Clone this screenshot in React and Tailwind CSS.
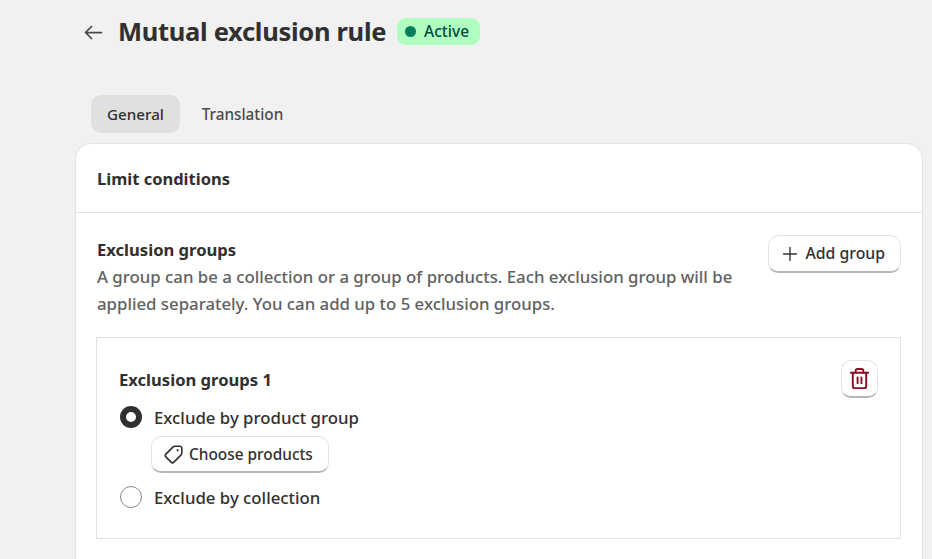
import React from 'react';
import { Plus, Trash2 } from 'lucide-react';

function BackArrow() {
  return (
    <svg viewBox="0 0 19 15" className="w-[19px] h-[15px]" fill="none" stroke="#4a4a4a" strokeWidth="1.75" strokeLinecap="round" strokeLinejoin="round">
      <path d="M1.5 7.5h16M7.5 1.5l-6 6 6 6" />
    </svg>
  );
}

function TagIcon() {
  return (
    <svg viewBox="0 0 20 20" className="w-[23px] h-[23px]" fill="none" stroke="#303030" strokeWidth="1.4" strokeLinejoin="round">
      <path d="M11.2 2.8h4.3a1.7 1.7 0 0 1 1.7 1.7v4.3c0 .6-.2 1.1-.6 1.5l-6.3 6.3a1.7 1.7 0 0 1-2.4 0l-4.5-4.5a1.7 1.7 0 0 1 0-2.4l6.3-6.3c.4-.4.9-.6 1.5-.6z" />
      <circle cx="13.6" cy="6.4" r="1" fill="#303030" stroke="none" />
    </svg>
  );
}

export default function App() {
  return (
    <div className="w-[932px] h-[559px] overflow-hidden bg-[#f1f1f1] font-['Noto_Sans',sans-serif] text-[#303030]">
      <div className="flex items-center h-[64px] pl-[84px]">
        <BackArrow />
        <h1 className="ml-[15px] text-[25.5px] font-bold leading-none tracking-[-0.3px]">Mutual exclusion rule</h1>
        <span className="ml-[11px] -mt-[2px] flex items-center h-[27px] pl-[8px] pr-[11px] pt-[1px] rounded-[9px] bg-[#affebf] text-[15.5px] text-[#014b40] font-medium">
          <span className="w-[11px] h-[11px] rounded-full bg-[#047b5d] mr-[8px]" />
          Active
        </span>
      </div>

      <div className="flex gap-[6px] pl-[91px] mt-[31px]">
        <div className="flex items-center justify-center w-[89px] h-[38px] rounded-[10px] bg-[#e0e0e0] text-[15.2px] font-medium">General</div>
        <div className="flex items-center justify-center w-[113px] h-[38px] text-[15.3px] font-medium text-[#4a4a4a]">Translation</div>
      </div>

      <div className="ml-[75px] mr-[9px] mt-[10px] h-[440px] rounded-t-[16px] border border-[#e3e3e3] bg-white">
        <div className="flex items-center h-[69px] pl-[21px] pr-[20px] pt-[2px] border-b border-[#e3e3e3] text-[16.5px] font-bold">Limit conditions</div>
        <div className="pl-[20px] pr-[21px] pt-[23px]">
          <div className="flex justify-between items-start">
            <div className="w-[650px] pl-[1px]">
              <div className="text-[16.6px] font-bold leading-[28px]">Exclusion groups</div>
              <p className="-mt-[1px] text-[16.8px] font-medium leading-[27px] text-[#616161]">A group can be a collection or a group of products. Each exclusion group will be applied separately. You can add up to 5 exclusion groups.</p>
            </div>
            <button className="-mt-[1px] flex items-center h-[38px] pl-[10px] pr-[15px] rounded-[10px] bg-white border border-[#e3e3e3] border-b-[2px] border-b-[#b5b5b5] text-[15.8px] font-medium">
              <Plus className="w-[22px] h-[22px] mr-[4px]" strokeWidth={1.5} />
              Add group
            </button>
          </div>

          <div className="mt-[20px] h-[202px] border border-[#e3e3e3] px-[22px] pt-[22px]">
            <div className="flex justify-between items-start">
              <div className="text-[16.6px] font-bold leading-[40px]">Exclusion groups 1</div>
              <button className="flex items-center justify-center w-[37px] h-[38px] rounded-[10px] bg-white border border-[#e3e3e3] border-b-[2px] border-b-[#b5b5b5]">
                <Trash2 className="w-[23px] h-[23px] text-[#8e0b21]" strokeWidth={2} />
              </button>
            </div>
            <div className="flex items-center mt-[2px] h-[30px]">
              <span className="ml-[1px] w-[22px] h-[22px] rounded-full border-[6px] border-[#303030] bg-white" />
              <span className="ml-[12px] pt-[1px] text-[16.8px] font-medium">Exclude by product group</span>
            </div>
            <button className="ml-[32px] mt-[4px] flex items-center h-[37px] pl-[10px] pr-[15px] rounded-[10px] bg-white border border-[#e3e3e3] border-b-[2px] border-b-[#b5b5b5] text-[15.4px] font-medium">
              <TagIcon />
              <span className="ml-[4px] pt-[2px]">Choose products</span>
            </button>
            <div className="flex items-center mt-[9px] h-[30px]">
              <span className="ml-[1px] w-[22px] h-[22px] rounded-full border border-[#8a8a8a] bg-white" />
              <span className="ml-[12px] pt-[1px] text-[16.8px] font-medium">Exclude by collection</span>
            </div>
          </div>
        </div>
      </div>
    </div>
  );
}
